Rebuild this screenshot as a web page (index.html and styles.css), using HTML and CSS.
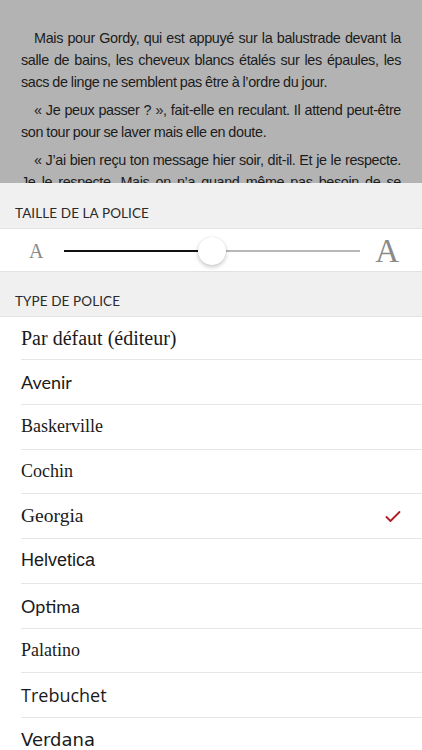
FILE: index.html
```html
<!DOCTYPE html>
<html lang="fr">
<head>
<meta charset="utf-8">
<title>Police</title>
<link rel="stylesheet" href="styles.css">
</head>
<body>
<div class="reader">
  <p>Mais pour Gordy, qui est appuyé sur la balustrade devant la salle de bains, les cheveux blancs étalés sur les épaules, les sacs de linge ne semblent pas être à l’ordre du jour.</p>
  <p>« Je peux passer ? », fait-elle en reculant. Il attend peut-être son tour pour se laver mais elle en doute.</p>
  <p>« J’ai bien reçu ton message hier soir, dit-il. Et je le respecte. Je le respecte. Mais on n’a quand même pas besoin de se barricader comme ça, tous les deux.</p>
</div>
<div class="panel">
  <div class="section-head">TAILLE DE LA POLICE</div>
  <div class="slider-row">
    <span class="a-small">A</span>
    <div class="track">
      <div class="track-fill"></div>
      <div class="thumb"></div>
    </div>
    <span class="a-big">A</span>
  </div>
  <div class="section-head">TYPE DE POLICE</div>
  <ul class="fonts">
    <li class="f-default">Par défaut (éditeur)</li>
    <li class="f-avenir">Avenir</li>
    <li class="f-baskerville">Baskerville</li>
    <li class="f-cochin">Cochin</li>
    <li class="f-georgia">Georgia
      <svg class="check" width="16" height="13" viewBox="0 0 16 13"><path d="M1.5 7 L5.5 11 L14.5 2" fill="none" stroke="#b01c22" stroke-width="1.8" stroke-linecap="round" stroke-linejoin="round"/></svg>
    </li>
    <li class="f-helvetica">Helvetica</li>
    <li class="f-optima">Optima</li>
    <li class="f-palatino">Palatino</li>
    <li class="f-trebuchet">Trebuchet</li>
    <li class="f-verdana">Verdana</li>
  </ul>
</div>
</body>
</html>
```
FILE: styles.css
```css
* { box-sizing: border-box; }
html, body { margin: 0; padding: 0; }
body {
  width: 422px;
  height: 750px;
  overflow: hidden;
  background: #f0f0f0;
  font-family: "Liberation Sans", Arial, sans-serif;
}
.reader {
  height: 183px;
  overflow: hidden;
  background: #b3b3b3;
  padding: 27px 21px 0 21px;
  color: #1c1c1c;
  font-family: "Liberation Sans", Arial, sans-serif;
  font-size: 14.4px;
  letter-spacing: -0.35px;
  word-spacing: -0.5px;
  line-height: 22px;
}
.reader p {
  margin: 0 0 6px 0;
  text-align: justify;
  text-indent: 13px;
}
.panel {
  background: #f0f0f0;
}
.section-head {
  height: 45px;
  display: flex;
  align-items: flex-end;
  padding: 0 0 7px 15px;
  font-family: "Lato", "Open Sans", sans-serif;
  font-size: 13.5px;
  color: #2a2a2a;
  letter-spacing: 0.1px;
}
.slider-row + .section-head { height: 44px; }
.slider-row {
  height: 44px;
  background: #fff;
  border-top: 1px solid #e2e2e2;
  border-bottom: 1px solid #e2e2e2;
  display: flex;
  align-items: center;
  padding: 0 23px 0 29px;
  font-family: "Liberation Serif", "Times New Roman", serif;
  color: #8a8a8a;
}
.a-small { font-size: 20px; line-height: 1; margin-top: 2px; }
.a-big { font-size: 33px; line-height: 1; margin-top: 3px; }
.track {
  flex: 1;
  position: relative;
  height: 2px;
  margin: 1px 15px 0 21px;
  background: #b8b8b8;
}
.track-fill {
  width: 50%;
  height: 2px;
  background: #111;
}
.thumb {
  position: absolute;
  left: 50%;
  top: 50%;
  width: 28px;
  height: 28px;
  margin: -14px 0 0 -14px;
  border-radius: 50%;
  background: #fff;
  box-shadow: 0 2px 4px rgba(0,0,0,0.22), 0 0 1px rgba(0,0,0,0.15);
}
.fonts {
  list-style: none;
  margin: 0;
  padding: 0 0 0 21px;
  background: #fff;
  border-top: 1px solid #e2e2e2;
}
.fonts li {
  height: 44.75px;
  display: flex;
  align-items: center;
  justify-content: space-between;
  padding-right: 21px;
  border-bottom: 1px solid #e6e6e6;
  color: #1a1a1a;
  font-size: 18px;
}
.fonts li:first-child { height: 43px; }
.f-default { font-family: "Liberation Serif", serif; font-size: 20px !important; }
.f-avenir { font-family: "Lato", sans-serif; }
.f-baskerville { font-family: "Liberation Serif", serif; }
.f-cochin { font-family: "Liberation Serif", serif; }
.f-georgia { font-family: "Liberation Serif", serif; font-size: 19.5px !important; }
.f-helvetica { font-family: "Liberation Sans", sans-serif; }
.f-optima { font-family: "Lato", sans-serif; }
.f-palatino { font-family: "Liberation Serif", serif; }
.f-trebuchet { font-family: "Open Sans", sans-serif; }
.f-verdana { font-family: "DejaVu Sans", sans-serif; }
```
